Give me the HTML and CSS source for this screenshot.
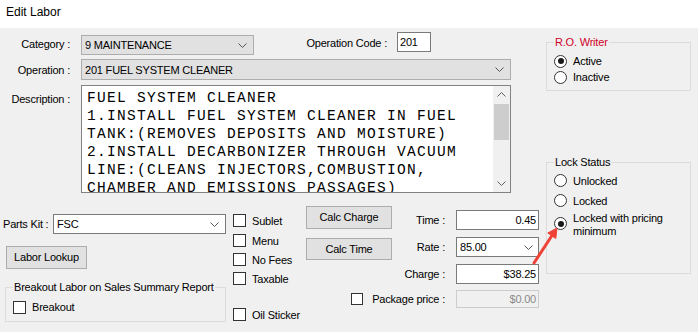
FILE: index.html
```html
<!DOCTYPE html>
<html>
<head>
<meta charset="UTF-8">
<title>Edit Labor</title>
<link rel="stylesheet" href="styles.css">
</head>
<body>
	<div class="title">Edit Labor</div>
	<div class="page">
		<div class="form">
			<div class="row row-cat">
				<label class="lbl">Category :</label>
				<div class="combo combo-ro cat">
					<span>9 MAINTENANCE</span>
					<svg class="chev" width="9" height="5" viewBox="0 0 9 5"><path d="M0.5 0.5 L4.5 4.5 L8.5 0.5"/></svg>
				</div>
				<label class="lbl-code">Operation Code :</label>
				<div class="input code">201</div>
			</div>
			<div class="row row-op">
				<label class="lbl">Operation :</label>
				<div class="combo combo-ro op">
					<span>201 FUEL SYSTEM CLEANER</span>
					<svg class="chev" width="9" height="5" viewBox="0 0 9 5"><path d="M0.5 0.5 L4.5 4.5 L8.5 0.5"/></svg>
				</div>
			</div>
			<div class="row row-desc">
				<label class="lbl lbl-desc">Description :</label>
				<div class="memo">
					<div class="memo-text">FUEL SYSTEM CLEANER
1.INSTALL FUEL SYSTEM CLEANER IN FUEL
TANK:(REMOVES DEPOSITS AND MOISTURE)
2.INSTALL DECARBONIZER THROUGH VACUUM
LINE:(CLEANS INJECTORS,COMBUSTION,
CHAMBER AND EMISSIONS PASSAGES)</div>
					<div class="scroll">
						<div class="sb-btn"><svg width="9" height="5" viewBox="0 0 9 5"><path d="M0.5 4.5 L4.5 0.5 L8.5 4.5"/></svg></div>
						<div class="sb-thumb"></div>
						<div class="sb-track"></div>
						<div class="sb-btn"><svg width="9" height="5" viewBox="0 0 9 5"><path d="M0.5 0.5 L4.5 4.5 L8.5 0.5"/></svg></div>
					</div>
				</div>
			</div>
			<div class="lower">
				<div class="col-a">
					<div class="kit">
						<label class="lbl-kit">Parts Kit :</label>
						<div class="combo kit-combo">
							<span>FSC</span>
							<svg class="chev" width="9" height="5" viewBox="0 0 9 5"><path d="M0.5 0.5 L4.5 4.5 L8.5 0.5"/></svg>
						</div>
					</div>
					<div class="btn btn-lookup">Labor Lookup</div>
					<fieldset class="group group-breakout">
						<legend>Breakout Labor on Sales Summary Report</legend>
						<div class="chk"><span class="box"></span>Breakout</div>
					</fieldset>
				</div>
				<div class="checks">
					<div class="chk"><span class="box"></span>Sublet</div>
					<div class="chk chk-menu"><span class="box"></span>Menu</div>
					<div class="chk"><span class="box"></span>No Fees</div>
					<div class="chk"><span class="box"></span>Taxable</div>
					<div class="chk chk-oil"><span class="box"></span>Oil Sticker</div>
				</div>
				<div class="calc">
					<div class="btn btn-charge">Calc Charge</div>
					<label class="lbl-calc">Time :</label>
					<div class="input num">0.45</div>

					<div class="btn btn-time">Calc Time</div>
					<label class="lbl-calc">Rate :</label>
					<div class="combo rate-combo">
						<span>85.00</span>
						<svg class="chev" width="9" height="5" viewBox="0 0 9 5"><path d="M0.5 0.5 L4.5 4.5 L8.5 0.5"/></svg>
					</div>

					<label class="lbl-calc lbl-charge">Charge :</label>
					<div class="input num">$38.25</div>

					<div class="pkg">
						<span class="box"></span>
						<label>Package price :</label>
					</div>
					<div class="input num disabled">$0.00</div>
				</div>
			</div>
		</div>
		<div class="side">
			<fieldset class="group group-ro">
				<legend>R.O. Writer</legend>
				<div class="radio-row"><span class="radio on"></span>Active</div>
				<div class="radio-row"><span class="radio"></span>Inactive</div>
			</fieldset>
			<fieldset class="group group-lock">
				<legend>Lock Status</legend>
				<div class="radio-row"><span class="radio"></span>Unlocked</div>
				<div class="radio-row lock-2"><span class="radio"></span>Locked</div>
				<div class="radio-row lock-3"><span class="radio on"></span><span>Locked with pricing<br>minimum</span></div>
			</fieldset>
		</div>
	</div>
	<svg class="arrow" width="698" height="332" viewBox="0 0 698 332">
		<line x1="534" y1="263" x2="552" y2="235.5"/>
		<polygon points="557,228 555.8,238.5 547.8,233"/>
	</svg>
</body>
</html>
```

FILE: styles.css
```css
body {
	margin: 0;
	width: 698px;
	height: 332px;
	overflow: hidden;
	position: relative;
	background: #f0f0f0;
	font: 11px "Liberation Sans", Arial, sans-serif;
	letter-spacing: -0.2px;
	color: #000;
}
.title {
	height: 28px;
	line-height: 25px;
	padding-left: 6px;
	background: #fff;
	font-size: 12px;
	letter-spacing: 0;
}
.page {
	display: flex;
}
.form {
	width: 546px;
	padding-top: 4px;
}
.row {
	display: flex;
	align-items: flex-start;
}
.lbl {
	width: 70px;
	margin-right: 11px;
	text-align: right;
}
.row-cat {
	height: 24px;
}
.row-cat .lbl {
	margin-top: 3px;
	line-height: 18px;
}
.lbl-code {
	width: 133px;
	margin-top: 1px;
	line-height: 20px;
	text-align: right;
}
.row-op {
	margin-top: 3px;
}
.row-op .lbl {
	line-height: 21px;
	padding-top: 1px;
}
.row-desc {
	margin-top: 4px;
}
.lbl-desc {
	padding-top: 8px;
	line-height: 13px;
}

/* combos, inputs, buttons */
.combo {
	box-sizing: border-box;
	display: flex;
	align-items: center;
	justify-content: space-between;
	padding: 0 6px 0 3px;
	border: 1px solid #7a7a7a;
	background: #fff;
}
.combo-ro {
	border-color: #adadad;
	background: #e1e1e1;
}
.chev path, .sb-btn path {
	fill: none;
	stroke: #555;
	stroke-width: 1;
}
.cat {
	width: 173px;
	height: 20px;
	margin-top: 3px;
}
.op {
	width: 430px;
	height: 21px;
}
.input {
	box-sizing: border-box;
	border: 1px solid #7a7a7a;
	background: #fff;
	padding: 0 2px;
}
.code {
	width: 34px;
	height: 20px;
	line-height: 18px;
	margin-left: 10px;
}
.num {
	height: 20px;
	line-height: 18px;
	text-align: right;
	align-self: center;
}
.num.disabled {
	height: 18px;
	line-height: 16px;
	border-color: #cccccc;
	background: #f0f0f0;
	color: #8a8a8a;
}
.btn {
	box-sizing: border-box;
	border: 1px solid #adadad;
	background: #e1e1e1;
	text-align: center;
}

/* description memo */
.memo {
	box-sizing: border-box;
	display: flex;
	width: 430px;
	height: 108px;
	border: 1px solid #828282;
	background: #fff;
}
.memo-text {
	flex: 1;
	padding: 3px 0 0 5px;
	overflow: hidden;
	white-space: pre;
	font: 14.5px "Liberation Mono", "Courier New", monospace;
	letter-spacing: 1.3px;
	line-height: 18px;
}
.scroll {
	width: 17px;
	display: flex;
	flex-direction: column;
	background: #f0f0f0;
}
.sb-btn {
	height: 17px;
	display: flex;
	align-items: center;
	justify-content: center;
}
.sb-btn path {
	stroke: #606060;
}
.sb-thumb {
	height: 36px;
	margin: 1px 1px 0;
	background: #cdcdcd;
}
.sb-track {
	flex: 1;
}

/* lower part */
.lower {
	display: flex;
	margin-top: 13px;
	padding-left: 3px;
}
.col-a {
	width: 223px;
}
.kit {
	display: flex;
	align-items: center;
	padding-top: 8px;
}
.lbl-kit {
	width: 50px;
}
.kit-combo {
	width: 173px;
	height: 20px;
}
.btn-lookup {
	width: 81px;
	height: 23px;
	line-height: 21px;
	margin: 12px 0 0 3px;
}

/* group boxes */
.group {
	margin: 0;
	min-width: 0;
	border: 1px solid #dcdcdc;
}
.group legend {
	padding: 0 1px;
	line-height: 13px;
}
.group-breakout {
	width: 221px;
	box-sizing: border-box;
	margin: 12px 0 0 2px;
	padding: 6px 7px 7px;
}
.group-breakout .chk {
	height: 14px;
}

.chk {
	display: flex;
	align-items: center;
	height: 13px;
}
.box {
	box-sizing: border-box;
	width: 13px;
	height: 13px;
	margin-right: 6px;
	border: 1px solid #333;
	background: #fff;
	flex: none;
}
.checks {
	width: 73px;
	margin-left: 7px;
	padding-top: 8px;
	display: flex;
	flex-direction: column;
	gap: 6px;
}
.chk-menu {
	margin-top: 1px;
}
.chk-oil {
	margin-top: 17px;
}

.calc {
	display: grid;
	grid-template-columns: 86px 64px 83px;
	grid-template-rows: 27px 28px 26px 24px;
}
.btn-charge {
	height: 23px;
	line-height: 21px;
	align-self: start;
}
.btn-time {
	height: 22px;
	line-height: 20px;
	align-self: end;
	margin-bottom: 1px;
}
.lbl-calc {
	align-self: center;
	padding-right: 11px;
	text-align: right;
}
.lbl-charge {
	grid-column: 2;
}
.rate-combo {
	height: 20px;
	align-self: center;
	padding-right: 5px;
}
.pkg {
	grid-column: 1 / 3;
	display: flex;
	align-items: center;
	padding-left: 45px;
}
.pkg .box {
	width: 12px;
	height: 12px;
}
.pkg label {
	margin-left: auto;
	padding-right: 11px;
}

/* right column */
.side {
	width: 145px;
	padding-top: 8px;
}
.group-ro {
	padding: 4px 7px 5px;
}
.group-ro legend {
	color: #d00028;
}
.group-lock {
	margin-top: 65px;
	padding: 4px 7px 36px;
}
.radio-row {
	display: flex;
	align-items: center;
	height: 16px;
}
.group-lock .radio-row {
	height: 15px;
}
.group-lock .lock-2 {
	margin-top: 5px;
}
.group-lock .lock-3 {
	margin-top: 4px;
	height: 25px;
	align-items: flex-start;
	line-height: 12.5px;
}
.lock-3 .radio {
	margin-top: 5px;
}
.radio {
	box-sizing: border-box;
	position: relative;
	width: 13px;
	height: 13px;
	margin-right: 6px;
	border: 1px solid #333;
	border-radius: 50%;
	background: #fff;
	flex: none;
}
.radio.on::after {
	content: "";
	position: absolute;
	left: 2.5px;
	top: 2.5px;
	width: 6px;
	height: 6px;
	border-radius: 50%;
	background: #1a1a1a;
}

/* annotation arrow */
.arrow {
	position: absolute;
	left: 0;
	top: 0;
	pointer-events: none;
}
.arrow line {
	stroke: #ef4136;
	stroke-width: 3;
	stroke-linecap: round;
}
.arrow polygon {
	fill: #ef4136;
	stroke: #ef4136;
	stroke-width: 1;
	stroke-linejoin: round;
}
```
